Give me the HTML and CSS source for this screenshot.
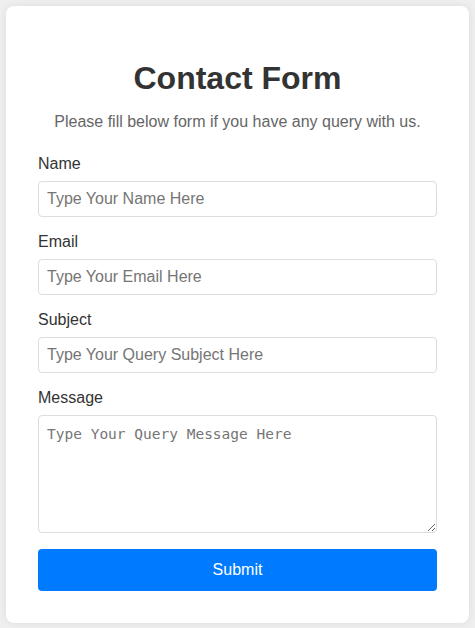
FILE: index.html
```html
<!DOCTYPE html>
<html lang="en">
<head>
  <meta charset="UTF-8">
  <title>Contact Form</title>
  <link rel="stylesheet" href="styles.css">
</head>
<body>

  <div class="contenedor">
    <h1>Contact Form</h1>
    <p class="subtitulo">Please fill below form if you have any query with us.</p>

    <form>
      <div class="grupo">
        <label for="nombre">Name</label>
        <input type="text" id="nombre" placeholder="Type Your Name Here">
      </div>

      <div class="grupo">
        <label for="email">Email</label>
        <input type="email" id="email" placeholder="Type Your Email Here">
      </div>

      <div class="grupo">
        <label for="asunto">Subject</label>
        <input type="text" id="asunto" placeholder="Type Your Query Subject Here">
      </div>

      <div class="grupo">
        <label for="mensaje">Message</label>
        <textarea id="mensaje" placeholder="Type Your Query Message Here"></textarea>
      </div>

      <button type="submit" class="btn-enviar">Submit</button>
    </form>
  </div>

</body>
</html>
```

FILE: styles.css
```css
body {
  font-family: "Liberation Sans", Arial, sans-serif;
  background-color: #efefef;
  margin: 0;
  padding: 6px;
}
.contenedor {
  background-color: white;
  border-radius: 8px;
  box-shadow: 0 0 8px rgba(0, 0, 0, 0.08);
  padding: 32px;
}
h1 {
  font-size: 32px;
  color: #333;
  text-align: center;
  margin: 22px 0 16px;
}
.subtitulo {
  font-size: 16px;
  color: #666;
  text-align: center;
  margin: 0 0 24px;
}
.grupo {
  margin-bottom: 16px;
}
.grupo label {
  display: block;
  font-size: 16px;
  color: #333;
  margin-bottom: 8px;
}
.grupo input, .grupo textarea {
  display: block;
  width: 100%;
  box-sizing: border-box;
  border: 1px solid #ddd;
  border-radius: 4px;
  padding: 8px;
}
.grupo input {
  font-family: "Liberation Sans", Arial, sans-serif;
  font-size: 16px;
  height: 36px;
}
.grupo textarea {
  font-family: "DejaVu Sans Mono", monospace;
  font-size: 14.5px;
  padding-top: 10px;
  height: 118px;
}
.btn-enviar {
  display: block;
  width: 100%;
  padding: 12px;
  background-color: #007bff;
  color: white;
  border: none;
  border-radius: 4px;
  font-family: "Liberation Sans", Arial, sans-serif;
  font-size: 16px;
  cursor: pointer;
}
```
